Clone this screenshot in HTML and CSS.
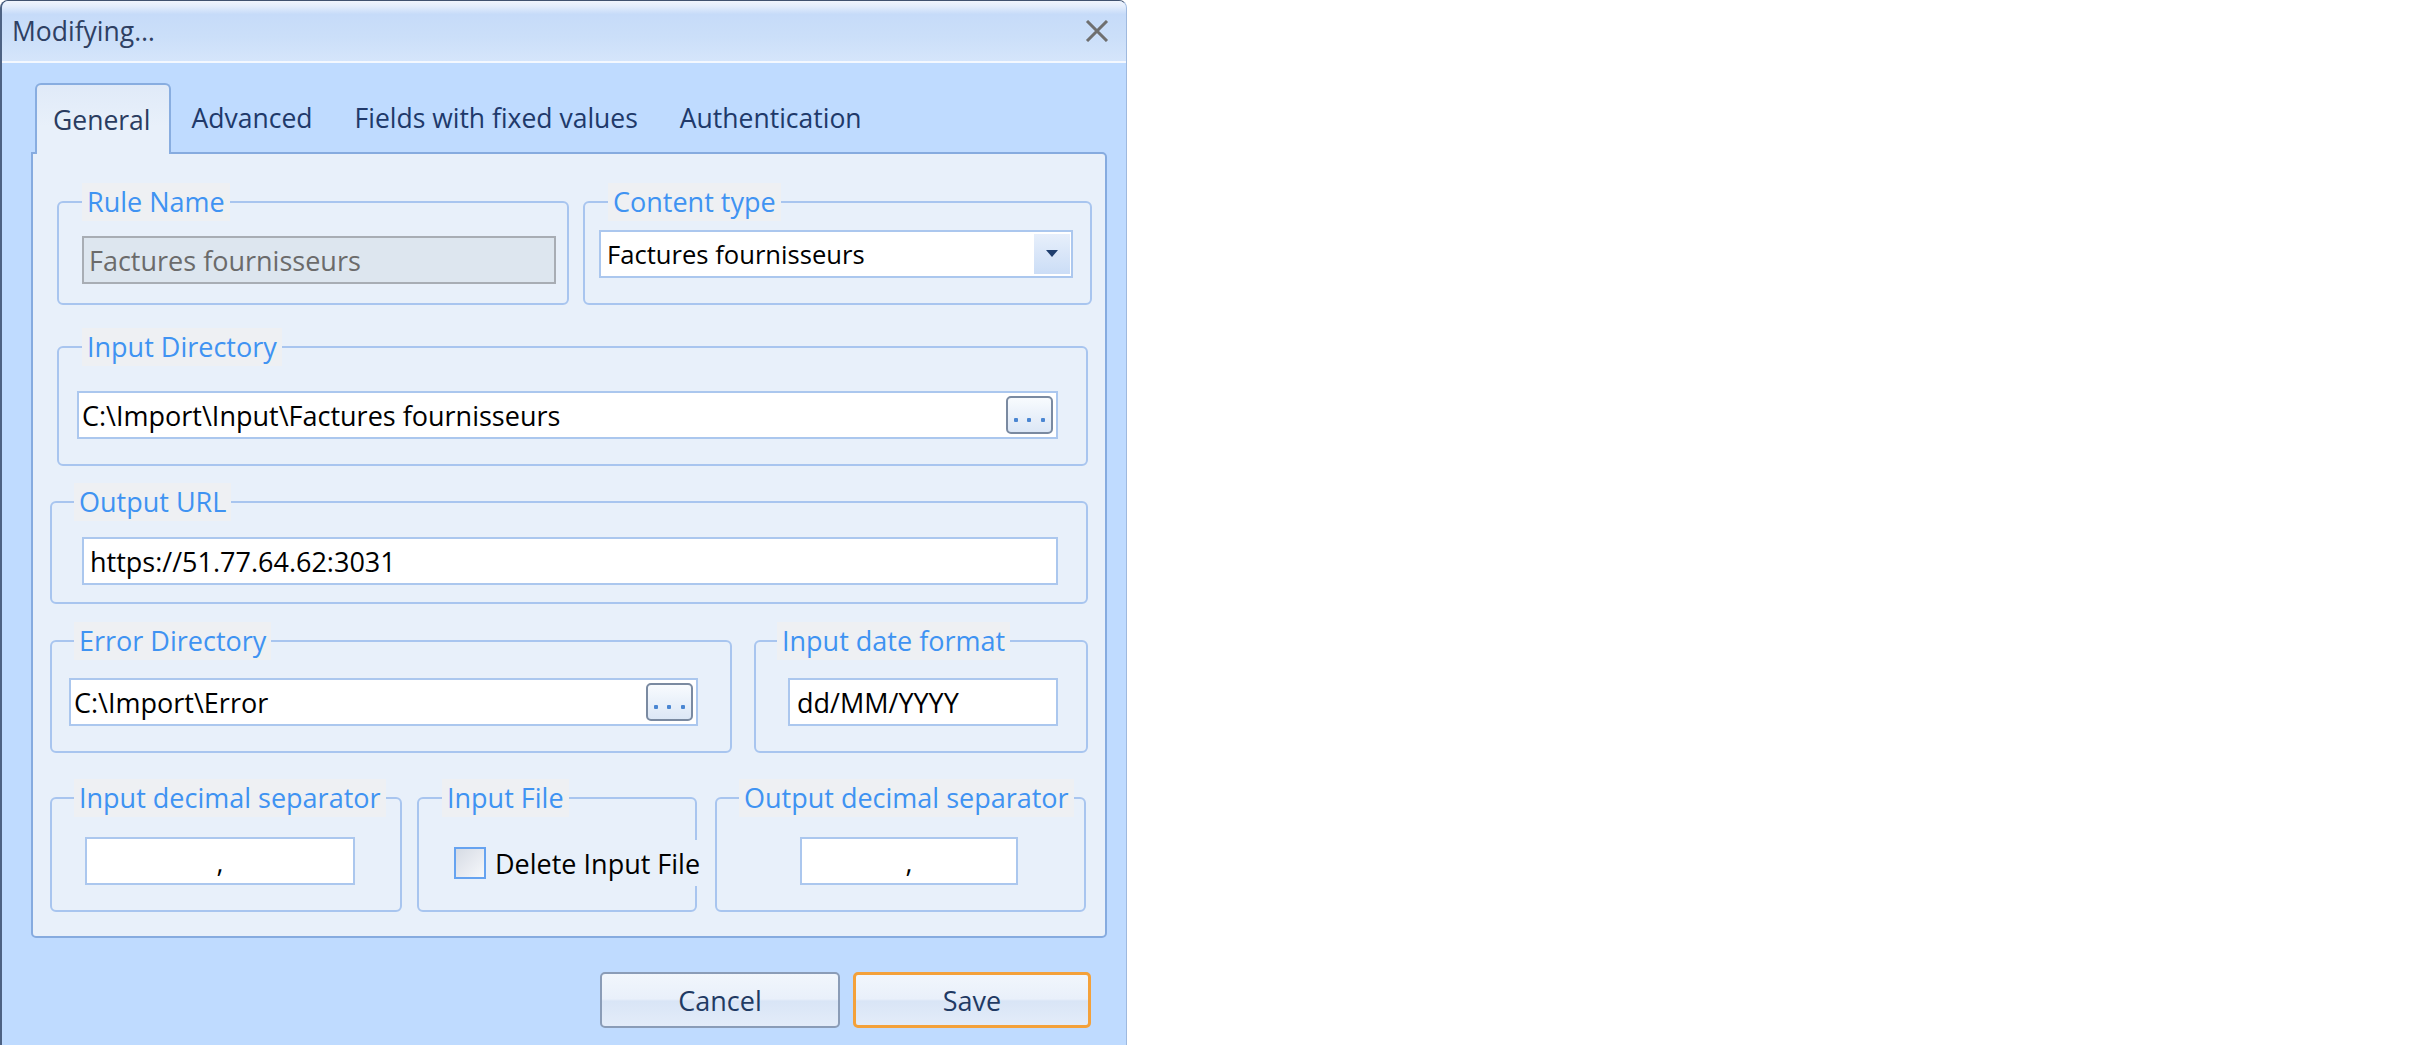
FILE: index.html
```html
<!DOCTYPE html>
<html>
<head>
<meta charset="utf-8">
<title>Modifying...</title>
<link rel="stylesheet" href="styles.css">
</head>
<body>
<div class="dialog">
  <div class="titlebar">
    <span class="title">Modifying…</span>
    <svg class="close" width="24" height="22" viewBox="0 0 24 22"><path d="M2 1 L22 21 M22 1 L2 21" stroke="#6f6f6f" stroke-width="3" fill="none"/></svg>
  </div>
  <div class="body">
    <div class="tabs">
      <div class="tab active">General</div>
      <div class="tab">Advanced</div>
      <div class="tab">Fields with fixed values</div>
      <div class="tab">Authentication</div>
    </div>
    <div class="panel">
      <div class="row row1">
        <fieldset class="grp w-rule"><legend class="lg23">Rule Name</legend>
          <div class="gc p-rule"><div class="tb disabled">Factures fournisseurs</div></div>
        </fieldset>
        <fieldset class="grp w-content"><legend class="lg23">Content type</legend>
          <div class="gc p-content"><div class="tb combo"><span>Factures fournisseurs</span><span class="dd"><svg width="12" height="7" viewBox="0 0 12 7"><path d="M0 0 H12 L6 7 Z" fill="#1f3e6e"/></svg></span></div></div>
        </fieldset>
      </div>
      <div class="row row2">
        <fieldset class="grp w-indir"><legend class="lg23">Input Directory</legend>
          <div class="gc p-indir"><div class="tb pl4"><span>C:\Import\Input\Factures fournisseurs</span><span class="browse"><svg width="31" height="4" viewBox="0 0 31 4"><rect x="0" y="0" width="4" height="4" rx="1" fill="#4a86d2"/><rect x="13" y="0" width="4" height="4" rx="1" fill="#4a86d2"/><rect x="27" y="0" width="4" height="4" rx="1" fill="#4a86d2"/></svg></span></div></div>
        </fieldset>
      </div>
      <div class="row row3">
        <fieldset class="grp w-out"><legend>Output URL</legend>
          <div class="gc p-out"><div class="tb pl6">https://51.77.64.62:3031</div></div>
        </fieldset>
      </div>
      <div class="row row4">
        <fieldset class="grp w-err"><legend>Error Directory</legend>
          <div class="gc p-err"><div class="tb pl4"><span>C:\Import\Error</span><span class="browse"><svg width="31" height="4" viewBox="0 0 31 4"><rect x="0" y="0" width="4" height="4" rx="1" fill="#4a86d2"/><rect x="13" y="0" width="4" height="4" rx="1" fill="#4a86d2"/><rect x="27" y="0" width="4" height="4" rx="1" fill="#4a86d2"/></svg></span></div></div>
        </fieldset>
        <fieldset class="grp w-date"><legend class="lg21">Input date format</legend>
          <div class="gc p-date"><div class="tb pl7">dd/MM/YYYY</div></div>
        </fieldset>
      </div>
      <div class="row row5">
        <fieldset class="grp w-idec"><legend>Input decimal separator</legend>
          <div class="gc p-idec"><div class="tb center">,</div></div>
        </fieldset>
        <fieldset class="grp w-file"><legend class="lg23">Input File</legend>
          <div class="gc p-file"><label class="chk"><span class="box"></span><span>Delete Input File</span></label></div>
        </fieldset>
        <fieldset class="grp w-odec"><legend>Output decimal separator</legend>
          <div class="gc p-odec"><div class="tb center">,</div></div>
        </fieldset>
      </div>
    </div>
    <div class="actions">
      <div class="btn w-cancel">Cancel</div>
      <div class="btn primary w-save">Save</div>
    </div>
  </div>
</div>
</body>
</html>
```

FILE: styles.css
```css
* { box-sizing: border-box; }
html, body { margin: 0; padding: 0; background: #ffffff; }
body {
  font-family: "Open Sans", "Noto Sans", "DejaVu Sans", sans-serif;
  font-size: 27px;
  color: #000;
}
.dialog {
  width: 1127px;
  height: 1045px;
  background: #bfdbff;
  border-left: 2px solid #4d6283;
  border-top: 1px solid #40526f;
  border-right: 1px solid #9fb9de;
  border-radius: 8px 8px 0 0;
  display: flex;
  flex-direction: column;
  overflow: hidden;
}
.titlebar {
  height: 62px;
  flex: none;
  display: flex;
  align-items: center;
  justify-content: space-between;
  padding: 0 17px 0 10px;
  background: linear-gradient(#f0f5fd 0%, #e3edfc 9%, #c6dbf9 22%, #cbdff9 60%, #d5e5fb 100%);
  border-bottom: 2px solid #f4f8fe;
}
.title { color: #2e4063; font-size: 26.5px; line-height: 1; }
.close { display: block; }
.body {
  flex: 1;
  padding: 20px 0 0 29px;
}
.tabs {
  display: flex;
  height: 69px;
  margin-left: 4px;
  align-items: stretch;
  font-size: 26.5px;
}
.tab {
  display: flex;
  align-items: center;
  padding: 0 21px;
  color: #20396a;
  white-space: nowrap;
}
.tab.active {
  position: relative;
  z-index: 1;
  height: 71px;
  padding: 0 18px 0 16px;
  border: 2px solid #88ade0;
  border-bottom: none;
  border-radius: 6px 6px 0 0;
  background: linear-gradient(#e0eaf8, #e8f0fa 60%);
  color: #2a3c60;
}
.panel {
  width: 1076px;
  height: 786px;
  border: 2px solid #86abdf;
  border-radius: 0 5px 5px 5px;
  background: #e8f0fa;
  padding-top: 29px;
}
.row { display: flex; align-items: flex-start; }
.row1 { margin-left: 24px; gap: 14px; }
.row2 { margin-left: 24px; margin-top: 23px; }
.row3 { margin-left: 17px; margin-top: 17px; }
.row4 { margin-left: 17px; margin-top: 18px; gap: 22px; }
.row5 { margin-left: 17px; margin-top: 26px; gap: 15px; }

.grp {
  margin: 0;
  padding: 0;
  min-width: 0;
  border: 2px solid #a8c5ef;
  border-radius: 6px;
}
.grp legend {
  margin-left: 22px;
  padding: 0 5px;
  height: 38px;
  line-height: 38px;
  background: #eef0f3;
  color: #3f93f2;
  white-space: nowrap;
}
.grp legend.lg23 { margin-left: 23px; }
.grp legend.lg21 { margin-left: 21px; }

.w-rule { width: 512px; }
.w-content { width: 509px; }
.w-indir { width: 1031px; }
.w-out { width: 1038px; }
.w-err { width: 682px; }
.w-date { width: 334px; }
.w-idec { width: 352px; }
.w-file { width: 280px; }
.w-odec { width: 371px; margin-left: 3px; }

.p-rule { padding: 15px 11px 19px 23px; }
.p-content { padding: 9px 17px 25px 14px; }
.p-indir { padding: 25px 28px 25px 18px; }
.p-out { padding: 16px 28px 17px 30px; }
.p-err { padding: 18px 32px 25px 17px; }
.p-date { padding: 18px 28px 25px 32px; }
.p-idec { padding: 20px 45px 25px 33px; }
.p-file { padding: 23px 0 24px 35px; }
.p-odec { padding: 20px 66px 25px 83px; }

.tb {
  height: 48px;
  border: 2px solid #abc7ee;
  background: #ffffff;
  display: flex;
  align-items: center;
  padding-left: 5px;
  white-space: nowrap;
  overflow: hidden;
}
.tb.pl4 { padding-left: 3px; }
.tb.pl6 { padding-left: 6px; }
.tb.pl7 { padding-left: 7px; }
.tb.disabled {
  background: #dde6ef;
  border-color: #a8adb4;
  color: #6b6b6b;
}
.tb.combo { padding-left: 6px; font-size: 25.6px; }
.tb.center { justify-content: center; padding-left: 0; }
.dd {
  margin-left: auto;
  margin-right: 1px;
  width: 36px;
  height: 40px;
  flex: none;
  background: linear-gradient(#e7effb, #cbddf6);
  display: flex;
  align-items: center;
  justify-content: center;
}
.dd svg { display: block; margin-top: -2px; }
.browse {
  margin-left: auto;
  margin-right: 3px;
  width: 47px;
  height: 38px;
  flex: none;
  border: 2px solid #7a8aa1;
  border-radius: 5px;
  background: linear-gradient(#f8fbfe, #dce7f6);
  display: flex;
  align-items: flex-end;
  justify-content: center;
  padding-bottom: 10px;
}
.browse svg { display: block; }

.chk {
  display: flex;
  align-items: center;
  gap: 9px;
  height: 46px;
  padding-right: 3px;
  background: #e8f0fa;
  white-space: nowrap;
  width: max-content;
}
.chk .box {
  width: 32px;
  height: 32px;
  flex: none;
  border: 2px solid #66a3f0;
  background: linear-gradient(135deg, #d6dbe4, #f6f8fb);
}

.actions {
  display: flex;
  justify-content: flex-end;
  gap: 13px;
  margin-top: 34px;
  margin-right: 35px;
}
.btn {
  height: 56px;
  display: flex;
  align-items: center;
  justify-content: center;
  border: 2px solid #8a9cb7;
  border-radius: 5px;
  background: linear-gradient(#f1f6fc 0%, #e9f0fa 48%, #d9e5f6 52%, #e3ecf9 100%);
  color: #1f3a63;
}
.btn.primary { border: 3px solid #f4a13a; }
.w-cancel { width: 240px; }
.w-save { width: 238px; }
```
